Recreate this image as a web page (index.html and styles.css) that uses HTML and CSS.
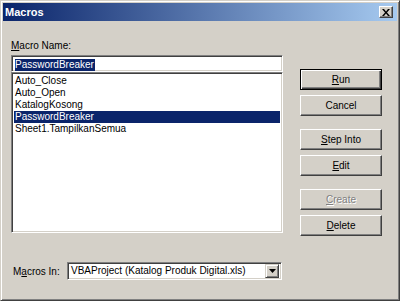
FILE: index.html
```html
<!DOCTYPE html>
<html>
<head>
<meta charset="utf-8">
<title>Macros</title>
<link rel="stylesheet" href="styles.css">
</head>
<body>
<div class="window">
  <div class="titlebar">
    <span class="title">Macros</span>
    <span class="close">
      <svg width="8" height="7" viewBox="0 0 8 7"><path d="M0 0h2l2 2.5L6 0h2L5 3.5 8 7H6L4 4.5 2 7H0l3-3.5z" fill="#000"/></svg>
    </span>
  </div>
  <div class="body">
    <div class="main">
      <div class="left">
        <div class="label"><u>M</u>acro Name:</div>
        <div class="namebox"><span class="sel">PasswordBreaker</span></div>
        <ul class="list">
          <li>Auto_Close</li>
          <li>Auto_Open</li>
          <li>KatalogKosong</li>
          <li class="active">PasswordBreaker</li>
          <li>Sheet1.TampilkanSemua</li>
        </ul>
      </div>
      <div class="buttons">
        <div class="group">
          <span class="btn default"><u>R</u>un</span>
          <span class="btn">Cancel</span>
        </div>
        <div class="group">
          <span class="btn"><u>S</u>tep Into</span>
          <span class="btn"><u>E</u>dit</span>
        </div>
        <div class="group">
          <span class="btn disabled"><u>C</u>reate</span>
          <span class="btn"><u>D</u>elete</span>
        </div>
      </div>
    </div>
    <div class="macros-in">
      <span class="in-label">M<u>a</u>cros In:</span>
      <div class="combo">
        <span class="combo-text">VBAProject (Katalog Produk Digital.xls)</span>
        <span class="drop">
          <svg width="7" height="4" viewBox="0 0 7 4"><path d="M0 0h7L3.5 4z" fill="#000"/></svg>
        </span>
      </div>
    </div>
  </div>
</div>
</body>
</html>
```

FILE: styles.css
```css
html, body {
  margin: 0;
  padding: 0;
  background: #d4d0c8;
}

body {
  font-family: "Liberation Sans", Arial, sans-serif;
  font-size: 10px;
  color: #000;
}

.window {
  width: 400px;
  height: 301px;
  box-sizing: border-box;
  background: #d4d0c8;
  border: 1px solid;
  border-color: #d4d0c8 #404040 #404040 #d4d0c8;
  box-shadow: inset 1px 1px #fff, inset -1px -1px #808080;
  padding: 2px;
  display: flex;
  flex-direction: column;
}

.titlebar {
  height: 18px;
  flex: none;
  background: linear-gradient(to right, #0a246a, #a6caf0);
  display: flex;
  align-items: center;
  justify-content: space-between;
  padding: 0 4px 0 2px;
}

.title {
  color: #fff;
  font-weight: bold;
  font-size: 11px;
}

.close {
  width: 14px;
  height: 12px;
  box-sizing: border-box;
  background: #d4d0c8;
  border: 1px solid;
  border-color: #fff #404040 #404040 #fff;
  box-shadow: inset -1px -1px #808080;
  display: flex;
  align-items: center;
  justify-content: center;
}

.body {
  flex: 1;
  padding: 18px 15px 0 8px;
  display: flex;
  flex-direction: column;
}

.main {
  display: flex;
  gap: 17px;
}

.left {
  width: 272px;
  display: flex;
  flex-direction: column;
}

.label {
  height: 13px;
  line-height: 13px;
  margin-bottom: 3px;
  padding-left: 0;
}

.sunken {
}

.namebox,
.list,
.combo {
  box-sizing: border-box;
  background: #fff;
  border: 1px solid;
  border-color: #808080 #fff #fff #808080;
  box-shadow: inset 1px 1px #404040, inset -1px -1px #d4d0c8;
}

.namebox {
  height: 17px;
  padding: 2px 2px 0 3px;
  line-height: 13px;
}

.sel {
  display: inline-block;
  background: #0a246a;
  color: #fff;
  height: 12px;
  line-height: 12px;
  padding: 0 1px 0 0;
}

.list {
  list-style: none;
  margin: 0;
  height: 161px;
  padding: 2px;
}

.list li {
  height: 12px;
  line-height: 12px;
  padding-left: 1px;
}

.list li.active {
  background: #0a246a;
  color: #fff;
}

.buttons {
  width: 82px;
  padding-top: 30px;
  display: flex;
  flex-direction: column;
  gap: 13px;
}

.group {
  display: flex;
  flex-direction: column;
  gap: 5px;
}

.btn {
  height: 21px;
  box-sizing: border-box;
  border: 1px solid;
  border-color: #fff #404040 #404040 #fff;
  box-shadow: inset -1px -1px #808080;
  display: flex;
  align-items: center;
  justify-content: center;
  background: #d4d0c8;
}

.btn.default {
  border-color: #000;
  box-shadow: inset 1px 1px #fff, inset -1px -1px #404040, inset -2px -2px #808080;
}

.btn.disabled {
  color: #808080;
  text-shadow: 1px 1px #fff;
}

.macros-in {
  margin-top: 26px;
  display: flex;
  align-items: center;
  padding-left: 2px;
}

.in-label {
  width: 54px;
}

.combo {
  width: 215px;
  height: 18px;
  display: flex;
  align-items: center;
  padding: 2px;
}

.combo-text {
  flex: 1;
  padding-left: 1px;
  line-height: 14px;
}

.drop {
  width: 14px;
  height: 14px;
  box-sizing: border-box;
  background: #d4d0c8;
  border: 1px solid;
  border-color: #d4d0c8 #404040 #404040 #d4d0c8;
  box-shadow: inset 1px 1px #fff, inset -1px -1px #808080;
  display: flex;
  align-items: center;
  justify-content: center;
}
```
